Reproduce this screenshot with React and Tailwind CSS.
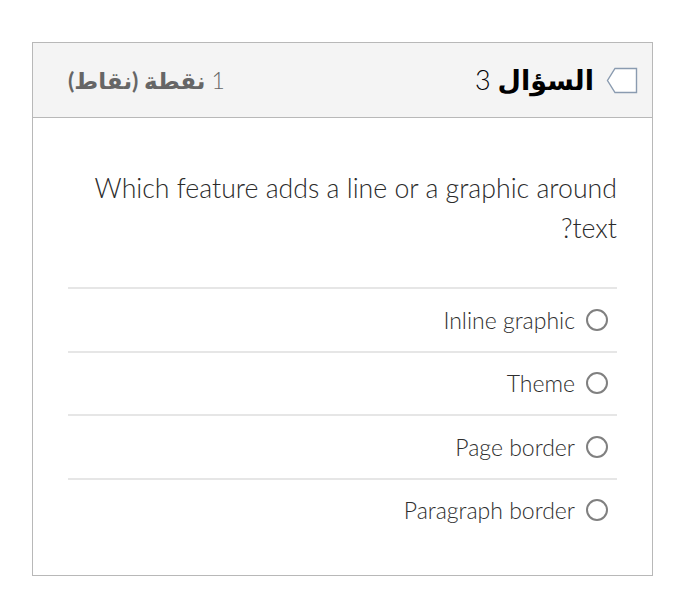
const options = ["Inline graphic", "Theme", "Page border", "Paragraph border"];

function FlagIcon() {
  return (
    <svg width="32" height="27" viewBox="0 0 32 27" fill="none">
      <path d="M30.5 1.5 H9 L1.5 13.5 L9 25.5 H30.5 Z" stroke="#8a9bb0" strokeWidth="1.4" fill="#fff" />
    </svg>
  );
}

export default function App() {
  return (
    <div className="w-[700px] h-[604px] bg-white pt-[42px] pl-[32px]" style={{ fontFamily: "Lato, 'DejaVu Sans', sans-serif" }}>
      <div dir="rtl" className="w-[621px] h-[534px] border border-[#b8b8b8] flex flex-col">
        <div className="h-[75px] bg-[#f4f4f4] border-b border-[#b8b8b8] flex items-center justify-between pr-[14px] pl-[35px]">
          <div className="flex items-center gap-[12px]">
            <FlagIcon />
            <span className="text-[27px] text-black">
              <span className="font-bold">السؤال</span> <span className="font-light">3</span>
            </span>
          </div>
          <span className="text-[23px] text-[#666]">
            <span className="font-light">1</span> <span className="font-bold">نقطة (نقاط)</span>
          </span>
        </div>
        <div className="px-[35px] pt-[50px]">
          <p className="text-[26.7px] leading-[40px] font-light text-[#2b2b2b] pb-[39px]">
            Which feature adds a line or a graphic around text?
          </p>
          <div className="flex flex-col">
            {options.map((o) => (
              <div key={o} className="h-[63.5px] border-t-2 border-[#e6e6e6] flex items-center gap-[11px] pr-[9px]">
                <span className="w-[22px] h-[22px] rounded-full border-2 border-[#808080] bg-white shrink-0"></span>
                <span className="text-[23px] font-light text-[#2e2e2e]">{o}</span>
              </div>
            ))}
          </div>
        </div>
      </div>
    </div>
  );
}
